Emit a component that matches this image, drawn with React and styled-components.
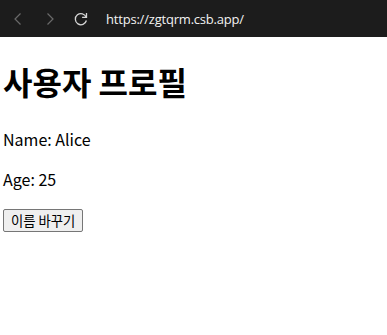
import React, { useState } from 'react';
import styled, { createGlobalStyle } from 'styled-components';

const GlobalStyle = createGlobalStyle`
  html, body {
    margin: 0;
    padding: 0;
    background: #fff;
  }
  body {
    font-family: "Noto Sans CJK KR", "Noto Sans", sans-serif;
    color: #000;
  }
`;

const Toolbar = styled.div`
  display: flex;
  align-items: center;
  height: 37px;
  background: #1c1c1c;
  padding-left: 11px;
  box-sizing: border-box;
`;

const NavButton = styled.span`
  display: flex;
  align-items: center;
  justify-content: center;
  width: ${(p) => p.$w || 24}px;
  height: 24px;
  margin-right: ${(p) => p.$gap || 0}px;
  color: ${(p) => (p.$active ? '#d6d6d6' : '#6a6a6a')};
`;

const Url = styled.span`
  font-family: "Open Sans", "Noto Sans", sans-serif;
  font-size: 13px;
  color: #f2f2f2;
  letter-spacing: -0.2px;
`;

const Page = styled.main`
  padding: 0 3px;
`;

const Title = styled.h1`
  font-size: 32px;
  font-weight: 700;
  margin: 21px 0 23px;
`;

const Line = styled.p`
  font-size: 16px;
  margin: 16px 0;
`;

const Button = styled.button`
  font-family: "Noto Sans CJK KR", sans-serif;
  font-size: 13.33px;
  padding: 1px 7px;
  border: 1px solid #767676;
  border-radius: 2px;
  background: #efefef;
  color: #000;
`;

export default function App() {
  const [name, setName] = useState('Alice');
  return (
    <>
      <GlobalStyle />
      <Toolbar>
        <NavButton $w={14} $gap={18}>
          <svg width="10" height="14" viewBox="0 0 10 14" fill="none" stroke="currentColor" strokeWidth="1.2">
            <path d="M7.5 1.5 L2 7 L7.5 12.5" />
          </svg>
        </NavButton>
        <NavButton $w={14} $gap={14}>
          <svg width="10" height="14" viewBox="0 0 10 14" fill="none" stroke="currentColor" strokeWidth="1.2">
            <path d="M2.5 1.5 L8 7 L2.5 12.5" />
          </svg>
        </NavButton>
        <NavButton $w={20} $gap={15} $active>
          <svg width="16" height="16" viewBox="0 0 16 16" fill="none" stroke="currentColor" strokeWidth="1.3">
            <path d="M13.2 6.2 A5.6 5.6 0 1 0 13.4 9.5" />
            <path d="M13.5 2 V6.4 H9.1" />
          </svg>
        </NavButton>
        <Url>https://zgtqrm.csb.app/</Url>
      </Toolbar>
      <Page>
        <Title>사용자 프로필</Title>
        <Line>Name: {name}</Line>
        <Line>Age: 25</Line>
        <Button onClick={() => setName('Bob')}>이름 바꾸기</Button>
      </Page>
    </>
  );
}
